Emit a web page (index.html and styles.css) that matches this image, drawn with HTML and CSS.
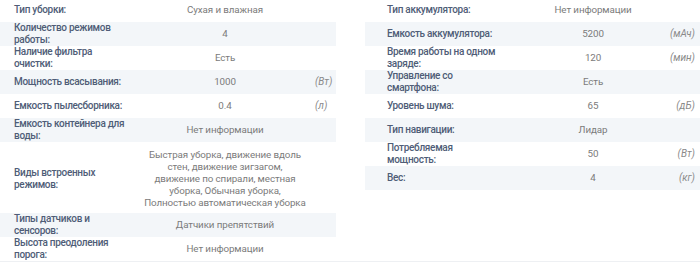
FILE: index.html
```html
<!DOCTYPE html>
<html lang="ru">
<head>
<meta charset="utf-8">
<link rel="stylesheet" href="styles.css">
</head>
<body>
<section class="specs">
  <div class="table table--left">
    <div class="row"><div class="label">Тип уборки:</div><div class="value">Сухая и влажная</div><div class="unit"></div></div>
    <div class="row"><div class="label">Количество режимов работы:</div><div class="value">4</div><div class="unit"></div></div>
    <div class="row"><div class="label">Наличие фильтра очистки:</div><div class="value">Есть</div><div class="unit"></div></div>
    <div class="row"><div class="label">Мощность всасывания:</div><div class="value">1000</div><div class="unit">(Вт)</div></div>
    <div class="row"><div class="label">Емкость пылесборника:</div><div class="value">0.4</div><div class="unit">(л)</div></div>
    <div class="row"><div class="label">Емкость контейнера для воды:</div><div class="value">Нет информации</div><div class="unit"></div></div>
    <div class="row"><div class="label">Виды встроенных режимов:</div><div class="value value--multi">Быстрая уборка, движение вдоль<br>стен, движение зигзагом,<br>движение по спирали, местная<br>уборка, Обычная уборка,<br>Полностью автоматическая уборка</div><div class="unit"></div></div>
    <div class="row"><div class="label">Типы датчиков и сенсоров:</div><div class="value">Датчики препятствий</div><div class="unit"></div></div>
    <div class="row"><div class="label">Высота преодоления порога:</div><div class="value">Нет информации</div><div class="unit"></div></div>
  </div>
  <div class="table table--right">
    <div class="row"><div class="label">Тип аккумулятора:</div><div class="value">Нет информации</div><div class="unit"></div></div>
    <div class="row"><div class="label">Емкость аккумулятора:</div><div class="value">5200</div><div class="unit">(мАч)</div></div>
    <div class="row"><div class="label">Время работы на одном заряде:</div><div class="value">120</div><div class="unit">(мин)</div></div>
    <div class="row"><div class="label">Управление со смартфона:</div><div class="value">Есть</div><div class="unit"></div></div>
    <div class="row"><div class="label">Уровень шума:</div><div class="value">65</div><div class="unit">(дБ)</div></div>
    <div class="row"><div class="label">Тип навигации:</div><div class="value">Лидар</div><div class="unit"></div></div>
    <div class="row"><div class="label">Потребляемая мощность:</div><div class="value">50</div><div class="unit">(Вт)</div></div>
    <div class="row"><div class="label">Вес:</div><div class="value">4</div><div class="unit">(кг)</div></div>
  </div>
</section>
</body>
</html>
```
FILE: styles.css
```css
html, body {
  margin: 0;
  padding: 0;
  background: #ffffff;
}
body {
  font-family: Roboto, "Noto Sans", Arial, sans-serif;
  overflow: hidden;
}
.specs {
  display: flex;
  gap: 29px;
  margin-top: -2px;
  height: 263px;
  overflow: hidden;
  border-bottom: 1px solid #eef0f3;
  box-sizing: content-box;
}
.table {
  display: flex;
  flex-direction: column;
  flex: none;
}
.table--left {
  width: 336px;
}
.table--right {
  width: 336px;
}
.row {
  display: grid;
  min-height: 24px;
  align-items: center;
}
.row:nth-child(even) {
  background: #f3f6f9;
}
.table--left .row {
  grid-template-columns: 135px 180px 21px;
}
.table--right .row {
  grid-template-columns: 166px 124px 46px;
}
.label {
  font-size: 10px;
  line-height: 12px;
  font-weight: 500;
  letter-spacing: -0.3px;
  color: #4f5d77;
}
.table--left .label {
  padding: 0 6px 0 14px;
}
.table--right .label {
  padding: 0 34px 0 22px;
}
.value {
  font-size: 9.8px;
  line-height: 12px;
  letter-spacing: -0.1px;
  color: #7b7b7b;
  text-align: center;
  white-space: nowrap;
}
.value--multi {
  padding-top: 7px;
  padding-bottom: 7px;
}
.unit {
  font-size: 10px;
  line-height: 12px;
  font-style: italic;
  color: #8a8a8a;
  white-space: nowrap;
}
.table--left .unit {
  text-align: left;
}
.table--right .unit {
  text-align: right;
  padding-right: 6px;
}
```
